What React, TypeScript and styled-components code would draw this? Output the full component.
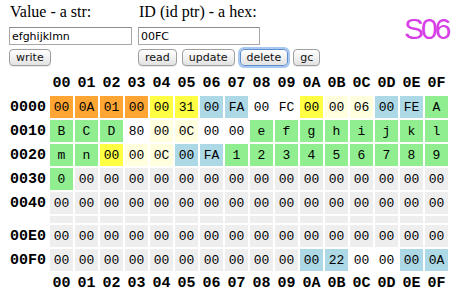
import React from "react";
import styled, { createGlobalStyle } from "styled-components";

const GlobalStyle = createGlobalStyle`
  html, body {
    margin: 0;
    padding: 0;
    background: #ffffff;
  }
  body {
    font-family: "Liberation Serif", serif;
    color: #000;
  }
`;

const colors: Record<string, string> = {
  o: "#ffa534",
  y: "#ffff44",
  l: "#ffffe0",
  b: "#add8e6",
  g: "#90ee90",
  w: "#ffffff",
  e: "#eeeeee",
};

const Page = styled.div`
  width: 472px;
  height: 299px;
  overflow: hidden;
  padding: 3px 0 0 8px;
  box-sizing: border-box;
`;

const Top = styled.div`
  display: grid;
  grid-template-columns: 129px 260px auto;
  align-items: start;
`;

const Field = styled.div`
  display: flex;
  flex-direction: column;
  align-items: flex-start;
  padding-left: 1px;
`;

const Label = styled.div`
  font-size: 16px;
  line-height: 18px;
  padding-left: 1px;
`;

const Input = styled.input<{ $w: number }>`
  margin: 6px 0 0;
  width: ${({ $w }) => $w}px;
  height: 18px;
  box-sizing: border-box;
  border: 1px solid #a8a8a8;
  border-top-color: #8c8c8c;
  padding: 0 2px;
  font-family: "DejaVu Sans", sans-serif;
  font-size: 11px;
  color: #000;
  outline: none;
`;

const Buttons = styled.div`
  display: flex;
  gap: 5px;
  margin-top: 4px;
`;

const Button = styled.button<{ $focus?: boolean }>`
  height: 17px;
  padding: 0 6px;
  border-radius: 4px;
  border: 1px solid ${({ $focus }) => ($focus ? "#5d8fd0" : "#9e9e9e")};
  background: linear-gradient(#ffffff, #f1f1f1 50%, #e2e2e2);
  box-shadow: ${({ $focus }) =>
    $focus ? "0 0 0 2px #a9c8ef" : "0 1px 0 rgba(0,0,0,0.08)"};
  font-family: "DejaVu Sans", sans-serif;
  font-size: 11px;
  line-height: 15px;
  color: #111;
`;

const Badge = styled.div`
  font-family: "Liberation Sans", sans-serif;
  font-size: 30px;
  line-height: 34px;
  letter-spacing: -3px;
  color: #d83ee8;
  padding: 9px 0 0 7px;
`;

const Grid = styled.table`
  border-collapse: separate;
  border-spacing: 2px;
  margin: 4px 0 0 0;
`;

const HeadCell = styled.td<{ $h: number }>`
  height: ${({ $h }) => $h}px;
  padding: 0;
  font-family: "Liberation Mono", monospace;
  font-weight: bold;
  font-size: 15px;
  text-align: center;
`;

const RowLabel = styled.td`
  width: 38px;
  padding: 0;
  font-family: "Liberation Mono", monospace;
  font-weight: bold;
  font-size: 15px;
  text-align: left;
`;

const Cell = styled.td<{ $c: string; $thin?: boolean }>`
  width: 23px;
  height: ${({ $thin }) => ($thin ? "7px" : "22px")};
  padding: 0;
  background: ${({ $c }) => colors[$c]};
  font-family: "Liberation Mono", monospace;
  font-size: 13px;
  text-align: center;
`;

const parse = (s: string) =>
  s.split(" ").map((t) => {
    const [v, c] = t.split(":");
    return { v, c };
  });

const gray16 = Array(16).fill("00:e").join(" ");

const rows = [
  { label: "0000", cells: parse("00:o 0A:o 01:o 00:o 00:y 31:y 00:b FA:b 00:w FC:w 00:y 00:l 06:l 00:b FE:b A:g") },
  { label: "0010", cells: parse("B:g C:g D:g 80:w 00:l 0C:l 00:w 00:w e:g f:g g:g h:g i:g j:g k:g l:g") },
  { label: "0020", cells: parse("m:g n:g 00:y 00:l 0C:l 00:b FA:b 1:g 2:g 3:g 4:g 5:g 6:g 7:g 8:g 9:g") },
  { label: "0030", cells: parse("0:g " + Array(15).fill("00:e").join(" ")) },
  { label: "0040", cells: parse(gray16) },
  { label: "", cells: parse(Array(16).fill(":e").join(" ")), thin: true },
  { label: "00E0", cells: parse(gray16) },
  { label: "00F0", cells: parse("00:e 00:e 00:e 00:e 00:e 00:e 00:e 00:e 00:e 00:e 00:b 22:b 00:w 00:w 00:b 0A:b") },
];

const cols = Array.from({ length: 16 }, (_, i) =>
  i.toString(16).toUpperCase().padStart(2, "0")
);

const HeaderRow = ({ h }: { h: number }) => (
  <tr>
    <RowLabel />
    {cols.map((c) => (
      <HeadCell key={c} $h={h}>
        {c}
      </HeadCell>
    ))}
  </tr>
);

export default function App() {
  return (
    <Page>
      <GlobalStyle />
      <Top>
        <Field>
          <Label>Value - a str:</Label>
          <Input $w={123} defaultValue="efghijklmn" />
          <Buttons>
            <Button>write</Button>
          </Buttons>
        </Field>
        <Field>
          <Label>ID (id ptr) - a hex:</Label>
          <Input $w={122} defaultValue="00FC" />
          <Buttons>
            <Button>read</Button>
            <Button>update</Button>
            <Button $focus>delete</Button>
            <Button>gc</Button>
          </Buttons>
        </Field>
        <Badge>S06</Badge>
      </Top>
      <Grid>
        <tbody>
          <HeaderRow h={22} />
          {rows.map((r, i) => (
            <tr key={i}>
              <RowLabel>{r.label}</RowLabel>
              {r.cells.map((c, j) => (
                <Cell key={j} $c={c.c} $thin={r.thin}>
                  {c.v}
                </Cell>
              ))}
            </tr>
          ))}
          <HeaderRow h={20} />
        </tbody>
      </Grid>
    </Page>
  );
}
